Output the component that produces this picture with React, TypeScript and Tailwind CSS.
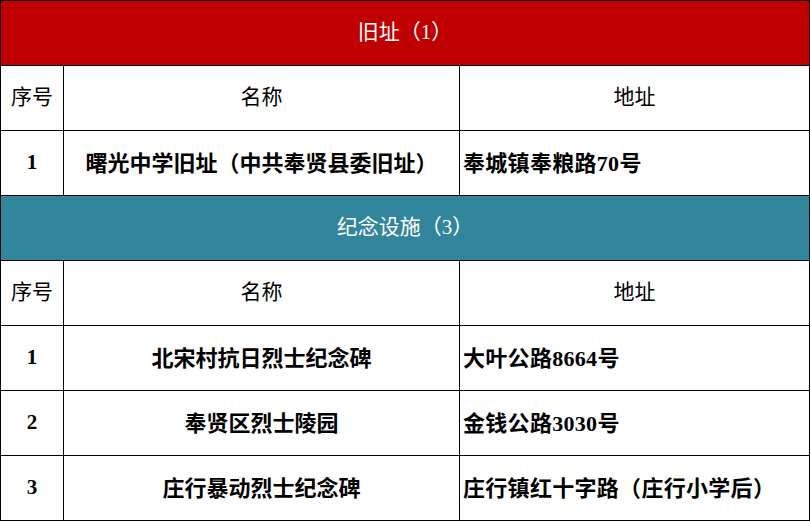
import React from "react";

const font = { fontFamily: "'Liberation Serif', 'Noto Sans CJK SC', serif" };

type Row = [string, string, string];

const Section = ({ title, color, rows }: { title: string; color: string; rows: Row[] }) => (
  <>
    <tr className="h-[65px]">
      <td colSpan={3} className={`border border-black text-center text-white text-[21px] font-normal ${color}`}>
        {title}
      </td>
    </tr>
    <tr className="h-[65px]">
      <td className="border border-black text-center text-[21px] font-normal">序号</td>
      <td className="border border-black text-center text-[21px] font-normal">名称</td>
      <td className="border border-black text-center text-[21px] font-normal">地址</td>
    </tr>
    {rows.map((r, i) => (
      <tr key={i} className="h-[65px]">
        <td className="border border-black text-center text-[21px] font-bold">{r[0]}</td>
        <td className="border border-black text-center text-[22px] font-bold">{r[1]}</td>
        <td className="border border-black text-left pl-[3px] text-[22px] font-bold tracking-[0.3px]">{r[2]}</td>
      </tr>
    ))}
  </>
);

export default function App() {
  return (
    <div className="w-[810px] h-[522px] bg-white text-black" style={font}>
      <table className="border-collapse table-fixed w-[809px]">
        <colgroup>
          <col className="w-[63px]" />
          <col className="w-[396px]" />
          <col className="w-[350px]" />
        </colgroup>
        <tbody>
          <Section
            title="旧址（1）"
            color="bg-[#c00000]"
            rows={[["1", "曙光中学旧址（中共奉贤县委旧址）", "奉城镇奉粮路70号"]]}
          />
          <Section
            title="纪念设施（3）"
            color="bg-[#31859c]"
            rows={[
              ["1", "北宋村抗日烈士纪念碑", "大叶公路8664号"],
              ["2", "奉贤区烈士陵园", "金钱公路3030号"],
              ["3", "庄行暴动烈士纪念碑", "庄行镇红十字路（庄行小学后）"],
            ]}
          />
        </tbody>
      </table>
    </div>
  );
}
